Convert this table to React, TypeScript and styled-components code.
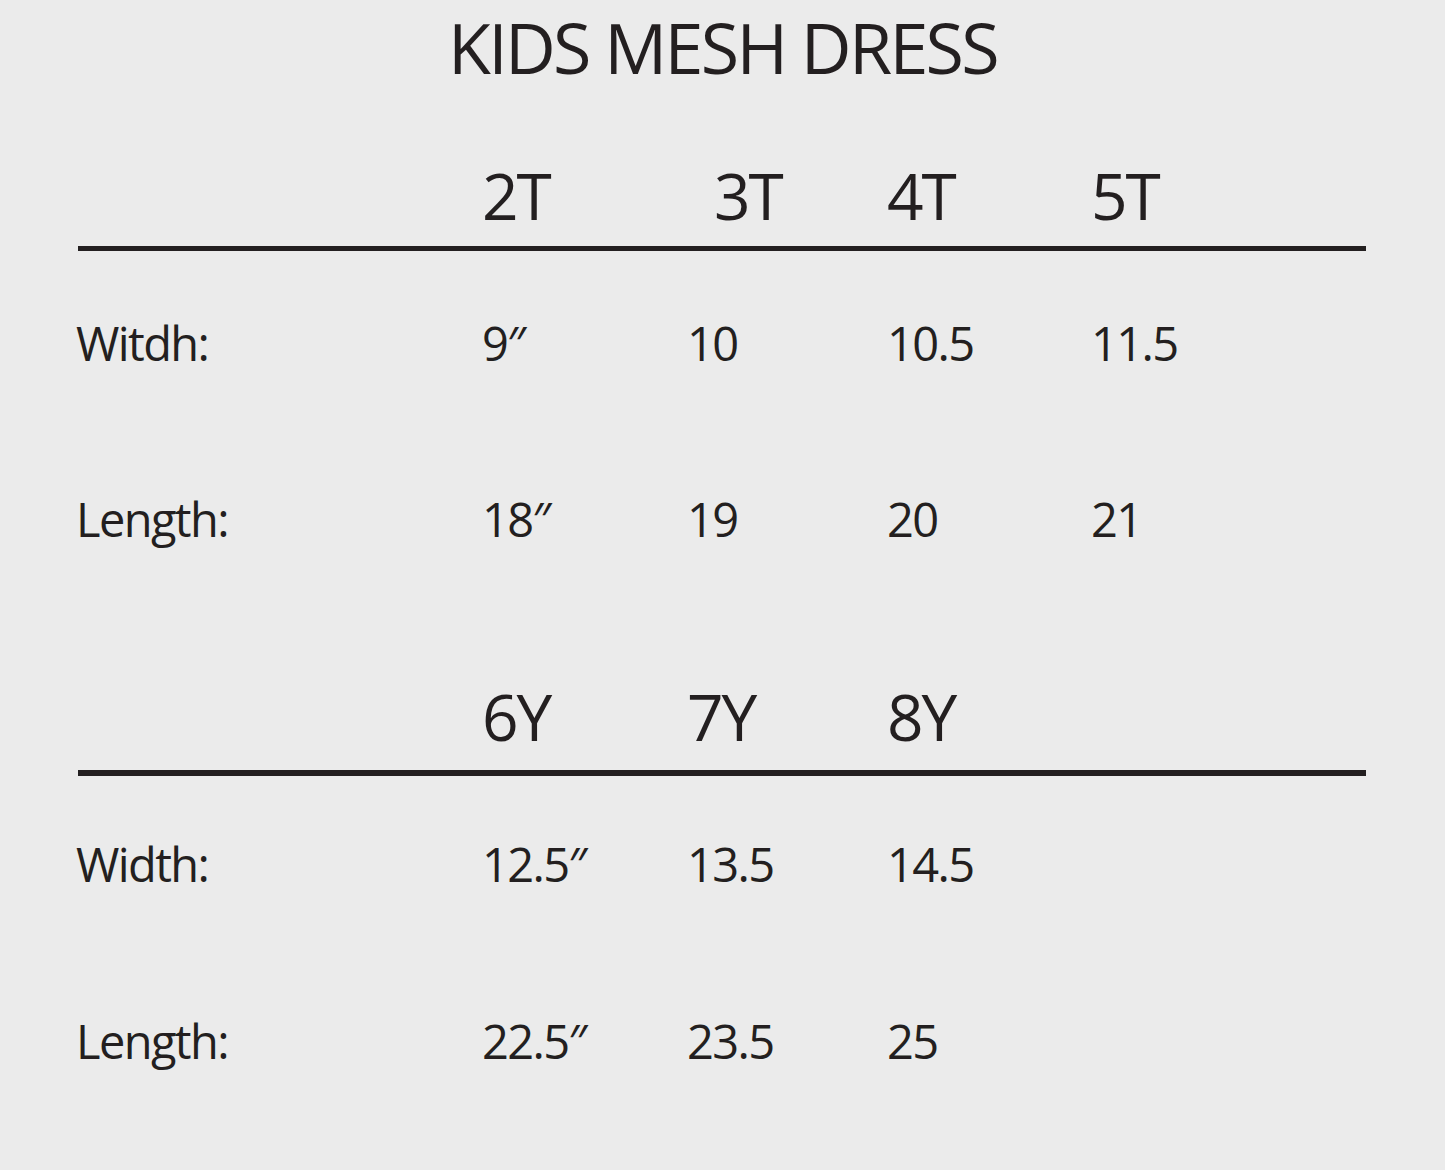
import React from "react";
import styled, { createGlobalStyle } from "styled-components";

const Global = createGlobalStyle`
  html, body { margin: 0; padding: 0; background: #ebebeb; }
  body { font-family: "Open Sans", "Noto Sans", sans-serif; color: #231f20; }
`;

const Page = styled.div`
  width: 1445px;
  min-height: 1170px;
  background: #ebebeb;
  padding: 12px 0 0 76px;
  box-sizing: border-box;
`;

const Title = styled.h1`
  margin: 0 0 0 -76px;
  width: 1445px;
  text-align: center;
  font-weight: 400;
  font-size: 70px;
  line-height: 70px;
  letter-spacing: -2.7px;
`;

const Table = styled.div<{ $top: number }>`
  margin-top: ${(p) => p.$top}px;
  width: 1290px;
`;

const Cols = "406px 205px 200px 204px 1fr";

const HeadRow = styled.div`
  display: grid;
  grid-template-columns: ${Cols};
  font-size: 64px;
  line-height: 64px;
  height: 64px;
  letter-spacing: -2px;
`;

const HeadCell = styled.span<{ $shift?: number }>`
  padding-left: ${(p) => p.$shift ?? 0}px;
`;

const Rule = styled.div<{ $top: number; $h: number }>`
  margin-top: ${(p) => p.$top}px;
  margin-left: 2px;
  height: ${(p) => p.$h}px;
  background: #231f20;
`;

const Row = styled.div<{ $top: number }>`
  display: grid;
  grid-template-columns: ${Cols};
  margin-top: ${(p) => p.$top}px;
  font-size: 47px;
  line-height: 47px;
  height: 47px;
  letter-spacing: -1.6px;
`;

type Section = {
  top: number;
  heads: { t: string; s?: number }[];
  ruleTop: number;
  ruleH: number;
  rows: { top: number; label: string; vals: string[] }[];
};

const sections: Section[] = [
  {
    top: 82,
    heads: [{ t: "2T" }, { t: "3T", s: 27 }, { t: "4T" }, { t: "5T" }],
    ruleTop: 18,
    ruleH: 5,
    rows: [
      { top: 69, label: "Witdh:", vals: ["9″", "10", "10.5", "11.5"] },
      { top: 129, label: "Length:", vals: ["18″", "19", "20", "21"] },
    ],
  },
  {
    top: 142,
    heads: [{ t: "6Y" }, { t: "7Y" }, { t: "8Y" }],
    ruleTop: 21,
    ruleH: 6,
    rows: [
      { top: 65, label: "Width:", vals: ["12.5″", "13.5", "14.5"] },
      { top: 130, label: "Length:", vals: ["22.5″", "23.5", "25"] },
    ],
  },
];

export default function App() {
  return (
    <>
      <Global />
      <Page>
        <Title>KIDS MESH DRESS</Title>
        {sections.map((sec, i) => (
          <Table key={i} $top={sec.top}>
            <HeadRow>
              <span />
              {sec.heads.map((h) => (
                <HeadCell key={h.t} $shift={h.s}>
                  {h.t}
                </HeadCell>
              ))}
            </HeadRow>
            <Rule $top={sec.ruleTop} $h={sec.ruleH} />
            {sec.rows.map((r) => (
              <Row key={r.label} $top={r.top}>
                <span>{r.label}</span>
                {r.vals.map((v, j) => (
                  <span key={j}>{v}</span>
                ))}
              </Row>
            ))}
          </Table>
        ))}
      </Page>
    </>
  );
}
